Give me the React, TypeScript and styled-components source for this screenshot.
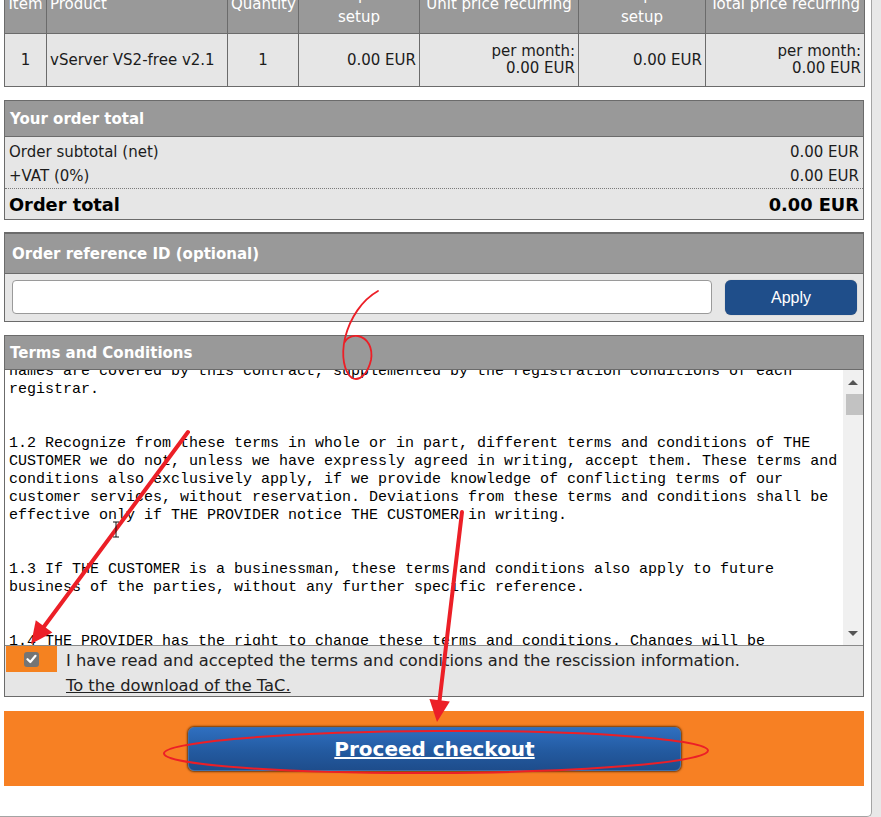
import React from "react";
import styled, { createGlobalStyle } from "styled-components";

const GlobalStyle = createGlobalStyle`
  html, body { margin: 0; padding: 0; background: #e8e8e8; }
  body { font-family: "DejaVu Sans", Verdana, sans-serif; overflow: hidden; }
  * { box-sizing: border-box; }
`;

const Viewport = styled.div`
  position: relative;
  width: 881px;
  height: 817px;
  overflow: hidden;
  background: #e8e8e8;
`;

const Panel = styled.div`
  width: 872px;
  margin-top: -19px;
  background: #fff;
  border-right: 1px solid #a4a4a4;
  border-bottom: 1px solid #a4a4a4;
  border-bottom-right-radius: 5px;
  padding: 0 0 30px 4px;
  display: flex;
  flex-direction: column;
`;

const ItemsTable = styled.table`
  width: 860px;
  border-collapse: collapse;
  table-layout: fixed;
  font-size: 15px;
  color: #1c1c1c;
  border: 1px solid #6b6b6b;
`;

const Col = styled.col<{ $w: number }>`
  width: ${(p) => p.$w}px;
`;

const Th = styled.th<{ $align?: string; $single?: boolean }>`
  background: #999;
  color: #fff;
  font-weight: normal;
  padding: ${(p) => (p.$single ? "11px" : "2px")} 3px 5px;
  line-height: 22px;
  vertical-align: top;
  text-align: ${(p) => p.$align || "center"};
  border: 1px solid #6b6b6b;
`;

const Td = styled.td<{ $align?: string }>`
  background: #e6e6e6;
  padding: 9px 3px;
  line-height: 17px;
  vertical-align: middle;
  text-align: ${(p) => p.$align || "left"};
  border: 1px solid #6b6b6b;
`;

const Box = styled.section<{ $top: number; $bw?: number }>`
  width: 860px;
  margin-top: ${(p) => p.$top}px;
  border: 1px solid #6b6b6b;
  border-top-width: ${(p) => p.$bw || 1}px;
  background: #e6e6e6;
  display: flex;
  flex-direction: column;
`;

const BoxHeader = styled.div<{ $h: number; $pad?: number }>`
  height: ${(p) => p.$h}px;
  flex: none;
  display: flex;
  align-items: center;
  padding-left: ${(p) => p.$pad ?? 5}px;
  background: #999;
  color: #fff;
  font-weight: bold;
  font-size: 15px;
  border-bottom: 1px solid #6b6b6b;
`;

const TotalRows = styled.div`
  padding-top: 3px;
  display: flex;
  flex-direction: column;
`;

const TotalRow = styled.div<{ $big?: boolean; $h: number }>`
  height: ${(p) => p.$h}px;
  display: flex;
  align-items: center;
  justify-content: space-between;
  padding: 0 4px;
  font-size: ${(p) => (p.$big ? "17.8px" : "15px")};
  font-weight: ${(p) => (p.$big ? "bold" : "normal")};
  color: ${(p) => (p.$big ? "#000" : "#1c1c1c")};
  border-top: ${(p) => (p.$big ? "1px dotted #7a7a7a" : "none")};
`;

const RefBody = styled.div`
  display: flex;
  gap: 13px;
  padding: 6px 6px 6px 7px;
`;

const RefInput = styled.input`
  flex: 1;
  height: 34px;
  border: 1px solid #9a9a9a;
  border-radius: 4px;
  background: #fff;
  font-size: 15px;
`;

const ApplyButton = styled.button`
  width: 132px;
  height: 35px;
  border: none;
  border-radius: 6px;
  background: #1f4e8a;
  color: #fff;
  font-family: "Liberation Sans", Arial, sans-serif;
  font-size: 16px;
  box-shadow: 0 0 1px rgba(0, 0, 0, 0.4);
`;

const TermsArea = styled.div`
  display: flex;
  height: 275px;
  background: #fff;
`;

const TermsText = styled.div`
  flex: 1;
  overflow: hidden;
  padding-left: 4px;
`;

const TermsInner = styled.pre`
  margin: -7px 0 0;
  font-family: "Liberation Mono", "Courier New", monospace;
  font-size: 15px;
  line-height: 18px;
  color: #000;
  white-space: pre;
`;

const ScrollBar = styled.div`
  width: 20px;
  background: #f0f0f0;
  display: flex;
  flex-direction: column;
  align-items: center;
  padding: 10px 0 9px;
`;

const Arrow = styled.div<{ $down?: boolean }>`
  width: 0;
  height: 0;
  border-left: 5px solid transparent;
  border-right: 5px solid transparent;
  ${(p) =>
    p.$down
      ? "border-top: 5px solid #555; margin-top: auto;"
      : "border-bottom: 5px solid #555;"}
`;

const Thumb = styled.div`
  width: 17px;
  height: 21px;
  margin-top: 9px;
  margin-left: 3px;
  background: #c2c2c2;
`;

const AcceptArea = styled.div`
  display: flex;
  border-top: 1px solid #8a8a8a;
  padding-left: 1px;
  height: 51px;
`;

const CheckCell = styled.div`
  width: 51px;
  height: 26px;
  background: #f58220;
  display: flex;
  align-items: center;
  justify-content: center;
`;

const CheckMark = styled.div`
  width: 15px;
  height: 15px;
  border-radius: 3px;
  background: #757575;
  display: flex;
  align-items: center;
  justify-content: center;
`;

const AcceptText = styled.div`
  margin-left: 9px;
  padding-top: 2px;
  font-size: 16.3px;
  line-height: 25px;
  color: #222;
`;

const TacLink = styled.a`
  color: #222;
  text-decoration: underline;
`;

const CheckoutBar = styled.div`
  width: 860px;
  height: 75px;
  margin-top: 14px;
  background: #f78023;
  display: flex;
  align-items: center;
  justify-content: center;
`;

const CheckoutButton = styled.button`
  width: 493px;
  height: 44px;
  border: 1px solid #3d6fae;
  border-radius: 6px;
  background: linear-gradient(#2f6fc0, #235aa0 55%, #1e4d8c);
  box-shadow: 0 0 2px 1px rgba(70, 35, 0, 0.75);
  color: #fff;
  font-family: "DejaVu Sans", Verdana, sans-serif;
  font-weight: bold;
  font-size: 20px;
  text-decoration: underline;
  margin-left: 1px;
`;

const Overlay = styled.svg`
  position: absolute;
  left: 0;
  top: 0;
  pointer-events: none;
`;

const termsLines = [
  "names are covered by this contract, supplemented by the registration conditions of each",
  "registrar.",
  "",
  "",
  "1.2 Recognize from these terms in whole or in part, different terms and conditions of THE",
  "CUSTOMER we do not, unless we have expressly agreed in writing, accept them. These terms and",
  "conditions also exclusively apply, if we provide knowledge of conflicting terms of our",
  "customer services, without reservation. Deviations from these terms and conditions shall be",
  "effective only if THE PROVIDER notice THE CUSTOMER in writing.",
  "",
  "",
  "1.3 If THE CUSTOMER is a businessman, these terms and conditions also apply to future",
  "business of the parties, without any further specific reference.",
  "",
  "",
  "1.4 THE PROVIDER has the right to change these terms and conditions. Changes will be",
  "notified to THE CUSTOMER in writing.",
];

const RED = "#ec1f27";

export default function App() {
  return (
    <>
      <GlobalStyle />
      <Viewport>
        <Panel>
          <ItemsTable>
            <colgroup>
              <Col $w={42} />
              <Col $w={181} />
              <Col $w={71} />
              <Col $w={121} />
              <Col $w={159} />
              <Col $w={127} />
              <Col $w={159} />
            </colgroup>
            <thead>
              <tr>
                <Th $single>Item</Th>
                <Th $single $align="left">
                  Product
                </Th>
                <Th $single>Quantity</Th>
                <Th>
                  Unit price
                  <br />
                  setup
                </Th>
                <Th $single>Unit price recurring</Th>
                <Th>
                  Total price
                  <br />
                  setup
                </Th>
                <Th $single>Total price recurring</Th>
              </tr>
            </thead>
            <tbody>
              <tr>
                <Td $align="center">1</Td>
                <Td>vServer VS2-free v2.1</Td>
                <Td $align="center">1</Td>
                <Td $align="right">0.00 EUR</Td>
                <Td $align="right">
                  per month:
                  <br />
                  0.00 EUR
                </Td>
                <Td $align="right">0.00 EUR</Td>
                <Td $align="right">
                  per month:
                  <br />
                  0.00 EUR
                </Td>
              </tr>
            </tbody>
          </ItemsTable>

          <Box $top={13}>
            <BoxHeader $h={36}>Your order total</BoxHeader>
            <TotalRows>
              <TotalRow $h={24}>
                <span>Order subtotal (net)</span>
                <span>0.00 EUR</span>
              </TotalRow>
              <TotalRow $h={24}>
                <span>+VAT (0%)</span>
                <span>0.00 EUR</span>
              </TotalRow>
              <TotalRow $h={31} $big>
                <span>Order total</span>
                <span>0.00 EUR</span>
              </TotalRow>
            </TotalRows>
          </Box>

          <Box $top={12} $bw={2}>
            <BoxHeader $h={40} $pad={7}>
              Order reference ID (optional)
            </BoxHeader>
            <RefBody>
              <RefInput type="text" />
              <ApplyButton>Apply</ApplyButton>
            </RefBody>
          </Box>

          <Box $top={13} $bw={1}>
            <BoxHeader $h={34}>Terms and Conditions</BoxHeader>
            <TermsArea>
              <TermsText>
                <TermsInner>{termsLines.join("\n")}</TermsInner>
              </TermsText>
              <ScrollBar>
                <Arrow />
                <Thumb />
                <Arrow $down />
              </ScrollBar>
            </TermsArea>
            <AcceptArea>
              <CheckCell>
                <CheckMark>
                  <svg width="11" height="10" viewBox="0 0 11 10">
                    <path
                      d="M1.5 5.2 L4.3 8 L9.5 1.8"
                      fill="none"
                      stroke="#fff"
                      strokeWidth="2.2"
                      strokeLinecap="round"
                      strokeLinejoin="round"
                    />
                  </svg>
                </CheckMark>
              </CheckCell>
              <AcceptText>
                I have read and accepted the terms and conditions and the rescission information.
                <br />
                <TacLink href="#">To the download of the TaC.</TacLink>
              </AcceptText>
            </AcceptArea>
          </Box>

          <CheckoutBar>
            <CheckoutButton>Proceed checkout</CheckoutButton>
          </CheckoutBar>
        </Panel>

        <Overlay width="881" height="817" viewBox="0 0 881 817">
          <path
            d="M378 291 C362 300 350 318 345 338 C341 356 344 372 352 378 C360 382 368 373 371 360 C373 348 368 338 358 336 C350 335 346 339 344 343"
            fill="none"
            stroke={RED}
            strokeWidth="1.8"
            strokeLinecap="round"
          />
          <line x1="188" y1="432" x2="40" y2="632" stroke={RED} strokeWidth="4" strokeLinecap="round" />
          <polygon points="31,644 52.4,632.4 35.8,620.2" fill={RED} />
          <line x1="462" y1="512" x2="439" y2="705" stroke={RED} strokeWidth="4" strokeLinecap="round" />
          <polygon points="437,722 449.8,701.4 429.4,699" fill={RED} />
          <ellipse
            cx="436"
            cy="752"
            rx="272"
            ry="21"
            fill="none"
            stroke={RED}
            strokeWidth="2"
            transform="rotate(-0.3 436 752)"
          />
          <path d="M113 522 h6 M116 522 v15 M113 537 h6" stroke="#111" strokeWidth="1" fill="none" />
        </Overlay>
      </Viewport>
    </>
  );
}
